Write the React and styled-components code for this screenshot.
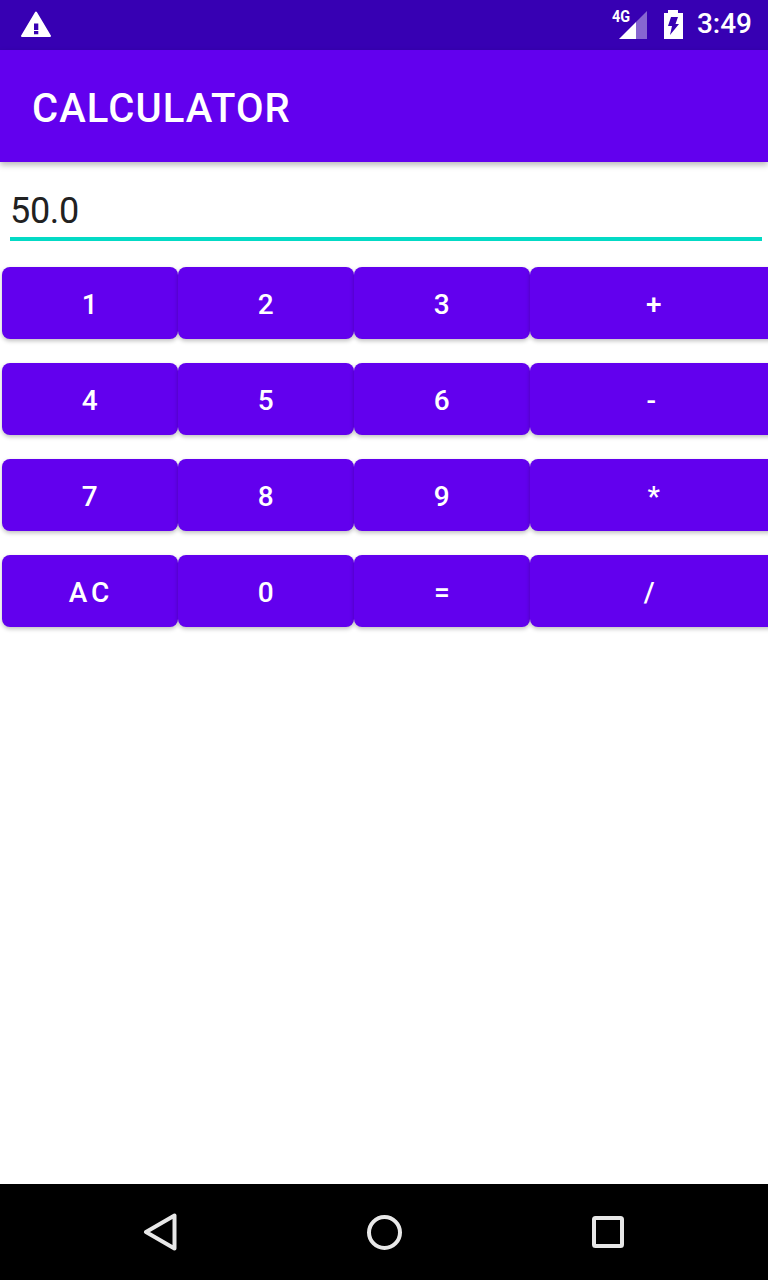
import styled, { createGlobalStyle } from "styled-components";

const GlobalStyle = createGlobalStyle`
  html, body {
    margin: 0;
    padding: 0;
    background: #fff;
    font-family: Roboto, "Liberation Sans", sans-serif;
  }
`;

const KEYS = [
  { label: "1" },
  { label: "2" },
  { label: "3" },
  { label: "+" },
  { label: "4" },
  { label: "5" },
  { label: "6" },
  { label: "-", nudge: 3 },
  { label: "7" },
  { label: "8" },
  { label: "9" },
  { label: "*" },
  { label: "AC", wide: true },
  { label: "0" },
  { label: "=" },
  { label: "/", nudge: 7 },
];

const App = () => {
  return (
    <Screen>
      <GlobalStyle />
      <StatusBar>
        <svg width="30" height="26" viewBox="0 0 30 26">
          <path
            fill="#fff"
            stroke="#fff"
            strokeWidth="2"
            strokeLinejoin="round"
            d="M15 1.500L29 25H1Z"
          />
          <path fill="#3700b3" d="M13 12.500H17.300V19H13ZM13 20H17.300V23.300H13Z" />
        </svg>
        <StatusRight>
          <SignalWrap>
            <svg width="28" height="28" viewBox="0 0 28 28">
              <path fill="#fff" fillOpacity="0.4" d="M17 11L28 0V28H17Z" />
              <path fill="#fff" d="M0 28L17 11V28Z" />
            </svg>
            <NetworkLabel>4G</NetworkLabel>
          </SignalWrap>
          <svg width="19" height="29" viewBox="0 0 19 29">
            <path
              fill="#fff"
              fillRule="evenodd"
              d="M4 0H14V3H19V29H0V3H4ZM7 7H14L11.500 14H15L6 25L8 16H4Z"
            />
          </svg>
          <Clock>3:49</Clock>
        </StatusRight>
      </StatusBar>
      <AppBar>CALCULATOR</AppBar>
      <Main>
        <Field>50.0</Field>
        <Keypad>
          {KEYS.map((key) => (
            <Key key={key.label} $nudge={key.nudge} $wide={key.wide}>
              {key.label}
            </Key>
          ))}
        </Keypad>
      </Main>
      <NavBar>
        <svg width="34" height="38" viewBox="0 0 34 38">
          <path
            d="M3 19L31.500 2.500V35.500Z"
            fill="none"
            stroke="#e8e8e8"
            strokeWidth="4"
            strokeLinejoin="round"
          />
        </svg>
        <svg width="35" height="35" viewBox="0 0 35 35">
          <circle cx="17.500" cy="17.500" r="15.500" fill="none" stroke="#e8e8e8" strokeWidth="4" />
        </svg>
        <svg width="32" height="32" viewBox="0 0 32 32">
          <rect
            x="2"
            y="2"
            width="28"
            height="28"
            rx="1.500"
            fill="none"
            stroke="#e8e8e8"
            strokeWidth="4"
          />
        </svg>
      </NavBar>
    </Screen>
  );
};

const Screen = styled.div`
  width: 768px;
  height: 1280px;
  display: flex;
  flex-direction: column;
  overflow: hidden;
`;

const StatusBar = styled.div`
  height: 50px;
  flex: none;
  box-sizing: border-box;
  padding: 0 16px 2px 21px;
  background: #3700b3;
  display: flex;
  align-items: center;
  justify-content: space-between;
`;

const StatusRight = styled.div`
  display: flex;
  align-items: center;
`;

const SignalWrap = styled.div`
  position: relative;
  width: 28px;
  height: 28px;
  margin-right: 17px;
  margin-top: 2px;
`;

const NetworkLabel = styled.span`
  position: absolute;
  left: -7px;
  top: -3px;
  color: #fff;
  font-size: 16px;
  line-height: 18px;
  font-weight: 700;
  transform: scaleX(0.9);
  transform-origin: left center;
`;

const Clock = styled.span`
  margin-left: 14px;
  color: #fff;
  font-size: 28px;
  font-weight: 500;
  line-height: 32px;
`;

const AppBar = styled.header`
  position: relative;
  z-index: 1;
  height: 112px;
  flex: none;
  box-sizing: border-box;
  padding: 4px 0 0 32px;
  background: #6200ee;
  color: #fff;
  font-size: 40px;
  font-weight: 500;
  letter-spacing: 1.100px;
  display: flex;
  align-items: center;
  box-shadow: 0 3px 6px rgba(0, 0, 0, 0.28);
`;

const Main = styled.main`
  flex: 1;
  background: #fff;
`;

const Field = styled.div`
  margin: 0 6px 0 10px;
  height: 79px;
  box-sizing: border-box;
  padding-top: 27px;
  border-bottom: 4px solid #03dac5;
  color: #212121;
  font-size: 36px;
  line-height: 44px;
  letter-spacing: -0.300px;
`;

const Keypad = styled.div`
  margin: 26px 0 0 2px;
  display: grid;
  grid-template-columns: repeat(3, 176px) 248px;
  grid-auto-rows: 72px;
  row-gap: 24px;
`;

const Key = styled.button`
  border: 0;
  padding: 2px 0 0 ${(p) => (p.$nudge ? 0 : 2)}px;
  padding-right: ${(p) => p.$nudge || 0}px;
  border-radius: 8px;
  background: #6200ee;
  color: #fff;
  font-family: inherit;
  font-size: 28px;
  font-weight: 500;
  letter-spacing: ${(p) => (p.$wide ? 4 : 2.5)}px;
  box-shadow: 0 2px 4px rgba(0, 0, 0, 0.25);
`;

const NavBar = styled.nav`
  height: 96px;
  flex: none;
  box-sizing: border-box;
  padding: 0 144px 0 143px;
  background: #000;
  display: flex;
  align-items: center;
  justify-content: space-between;
`;

export default App;
